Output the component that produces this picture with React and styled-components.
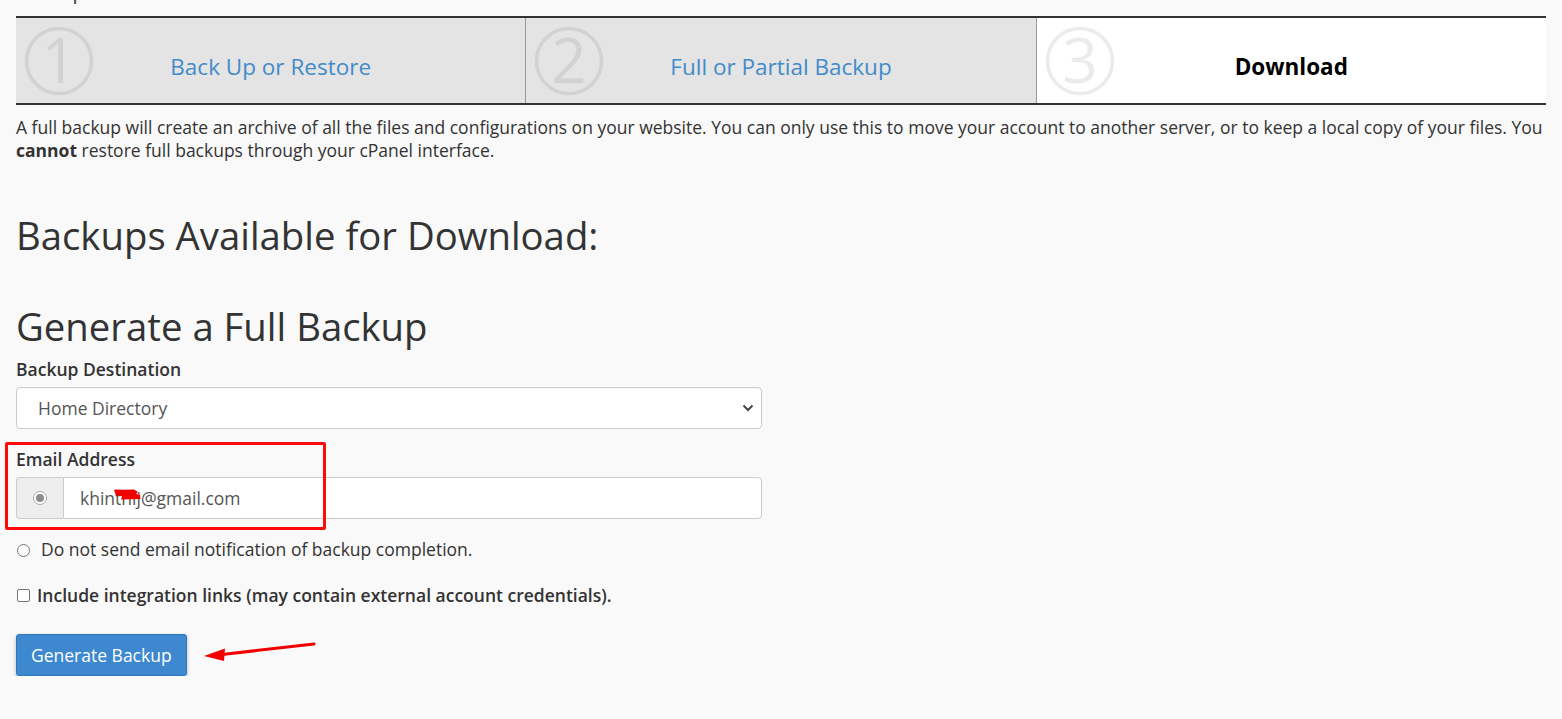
import React from "react";
import styled, { createGlobalStyle } from "styled-components";

const GlobalStyle = createGlobalStyle`
  html, body {
    margin: 0;
    padding: 0;
    background: #f9f9f9;
  }
  body {
    font-family: "Open Sans", "Liberation Sans", sans-serif;
    font-size: 17.5px;
    line-height: 23px;
    color: #333;
    overflow: hidden;
  }
  * { box-sizing: border-box; }
`;

const Page = styled.div`
  padding: 0 16px;
`;

const PageTitle = styled.h1`
  margin: -18px 0 0;
  font-size: 20px;
  line-height: 20px;
  font-weight: 400;
  color: #333;
`;

const Wizard = styled.div`
  margin-top: 14px;
  display: flex;
  border-top: 2px solid #333;
  border-bottom: 2px solid #333;
`;

const Step = styled.div`
  position: relative;
  flex: 1;
  height: 85px;
  padding-top: 12px;
  display: flex;
  align-items: center;
  justify-content: center;
  background: ${(p) => (p.$active ? "#fff" : "#e4e4e4")};
  & + & {
    border-left: 1px solid #999;
  }
`;

const StepBadge = styled.svg`
  position: absolute;
  left: 8px;
  top: 8px;
  width: 70px;
  height: 70px;
  color: rgba(0, 0, 0, 0.08);
`;

const StepLabel = styled.span`
  font-size: 22.5px;
  line-height: 30px;
  color: ${(p) => (p.$active ? "#000" : "#428bca")};
  font-weight: ${(p) => (p.$active ? 700 : 400)};
`;

const Intro = styled.p`
  margin: 11px 0 0;
  line-height: 23px;
`;

const SectionTitle = styled.h2`
  margin: ${(p) => p.$gap}px 0 0;
  font-size: 38.3px;
  line-height: 40px;
  font-weight: 400;
  color: #333;
`;

const Field = styled.div`
  position: relative;
  margin-top: ${(p) => p.$gap}px;
  width: 746px;
`;

const FieldLabel = styled.label`
  display: block;
  font-weight: 600;
  line-height: 23px;
  margin-bottom: 6px;
`;

const SelectWrap = styled.div`
  position: relative;
`;

const Select = styled.select`
  appearance: none;
  width: 100%;
  height: 42px;
  border: 1px solid #ccc;
  border-radius: 4px;
  background: #fff;
  padding: 0 40px 0 21px;
  font: inherit;
  color: #555;
  box-shadow: inset 0 1px 1px rgba(0, 0, 0, 0.04);
`;

const Chevron = styled.svg`
  position: absolute;
  right: 8px;
  top: 16px;
  width: 12px;
  height: 10px;
  pointer-events: none;
`;

const InputGroup = styled.div`
  position: relative;
  display: flex;
  height: 42px;
  margin-top: 1px;
`;

const Addon = styled.span`
  width: 47px;
  display: flex;
  align-items: center;
  justify-content: center;
  background: #eee;
  border: 1px solid #ccc;
  border-right: none;
  border-radius: 4px 0 0 4px;
`;

const AddonRadio = styled.span`
  width: 14px;
  height: 14px;
  border-radius: 50%;
  border: 1px solid #a9a9a9;
  background: #fff;
  display: flex;
  align-items: center;
  justify-content: center;
  &::after {
    content: "";
    width: 8px;
    height: 8px;
    border-radius: 50%;
    background: #8c8c8c;
  }
`;

const TextInput = styled.input`
  flex: 1;
  min-width: 0;
  height: 42px;
  border: 1px solid #ccc;
  border-radius: 0 4px 4px 0;
  background: #fff;
  padding: 0 16px;
  font: inherit;
  color: #555;
  outline: none;
`;

const Redaction = styled.svg`
  position: absolute;
  left: 97px;
  top: 11px;
  width: 28px;
  height: 13px;
  pointer-events: none;
`;

const Highlight = styled.div`
  position: absolute;
  left: -11px;
  top: -6px;
  width: 321px;
  height: 88px;
  border: 3px solid #ff0a0a;
  border-radius: 2px;
  pointer-events: none;
`;

const OptionRow = styled.label`
  display: flex;
  align-items: center;
  margin-top: ${(p) => p.$gap}px;
  line-height: 23px;
  font-weight: ${(p) => (p.$bold ? 600 : 400)};
`;

const Radio = styled.input.attrs({ type: "radio" })`
  appearance: none;
  width: 13px;
  height: 13px;
  margin: 2px 11px 0 1px;
  border: 1px solid #767676;
  border-radius: 50%;
  background: #fff;
`;

const Checkbox = styled.input.attrs({ type: "checkbox" })`
  appearance: none;
  width: 13px;
  height: 13px;
  margin: 0 7px 0 1px;
  border: 1px solid #767676;
  border-radius: 2px;
  background: #fff;
`;

const ButtonRow = styled.div`
  display: flex;
  align-items: flex-start;
  margin-top: 27px;
`;

const PrimaryButton = styled.button`
  height: 42px;
  padding: 0 14px;
  background: #3d88cf;
  border: 1px solid #2f77bb;
  border-radius: 3px;
  color: #fff;
  font: inherit;
  box-shadow: 0 2px 4px rgba(0, 0, 0, 0.25);
  cursor: pointer;
`;

const Arrow = styled.svg`
  margin: 5px 0 0 16px;
  width: 114px;
  height: 24px;
`;

const steps = [
  { n: "1", label: "Back Up or Restore" },
  { n: "2", label: "Full or Partial Backup" },
  { n: "3", label: "Download", active: true },
];

export default function App() {
  return (
    <>
      <GlobalStyle />
      <Page>
        <PageTitle>Backup Wizard</PageTitle>
        <Wizard>
          {steps.map((s) => (
            <Step key={s.n} $active={s.active}>
              <StepBadge viewBox="0 0 70 70">
                <circle cx="35" cy="35" r="32.5" fill="none" stroke="currentColor" strokeWidth="3.5" />
                <text
                  x="35"
                  y="57"
                  textAnchor="middle"
                  fontSize="62"
                  fontWeight="400"
                  fontFamily="'Open Sans', 'DejaVu Sans', sans-serif"
                  fill="currentColor"
                >
                  {s.n}
                </text>
              </StepBadge>
              <StepLabel $active={s.active}>{s.label}</StepLabel>
            </Step>
          ))}
        </Wizard>
        <Intro>
          A full backup will create an archive of all the files and configurations on your website. You can only use this to move your account to another server, or to keep a local copy of your files. You <b>cannot</b> restore full backups through your cPanel interface.
        </Intro>
        <SectionTitle $gap={53}>Backups Available for Download:</SectionTitle>
        <SectionTitle $gap={51}>Generate a Full Backup</SectionTitle>

        <Field $gap={12}>
          <FieldLabel htmlFor="dest">Backup Destination</FieldLabel>
          <SelectWrap>
            <Select id="dest" defaultValue="home">
              <option value="home">Home Directory</option>
            </Select>
            <Chevron viewBox="0 0 12 10">
              <path d="M1.5 2.5 L6 7 L10.5 2.5" fill="none" stroke="#444" strokeWidth="2" />
            </Chevron>
          </SelectWrap>
        </Field>

        <Field $gap={19}>
          <FieldLabel htmlFor="email">Email Address</FieldLabel>
          <InputGroup>
            <Addon>
              <AddonRadio />
            </Addon>
            <TextInput id="email" defaultValue="khinthij@gmail.com" />
            <Redaction viewBox="0 0 28 13">
              <path d="M1 2 L21 1.5 L25 4 L23 6 L27 6.5 L27.5 11 L8 11.5 L9 8 L3 7.5 Z" fill="#f20000" />
              <path d="M2 3 L20 4" stroke="#f20000" strokeWidth="3" />
            </Redaction>
          </InputGroup>
          <Highlight />
        </Field>

        <OptionRow $gap={19}>
          <Radio name="notify" />
          Do not send email notification of backup completion.
        </OptionRow>

        <OptionRow $gap={23} $bold>
          <Checkbox />
          Include integration links (may contain external account credentials).
        </OptionRow>

        <ButtonRow>
          <PrimaryButton>Generate Backup</PrimaryButton>
          <Arrow viewBox="0 0 114 24">
            <path d="M19 15.5 L111 5" stroke="#f20000" strokeWidth="3" strokeLinecap="round" />
            <path d="M1 17 L22 9.5 L21 22 Z" fill="#f20000" />
          </Arrow>
        </ButtonRow>
      </Page>
    </>
  );
}
